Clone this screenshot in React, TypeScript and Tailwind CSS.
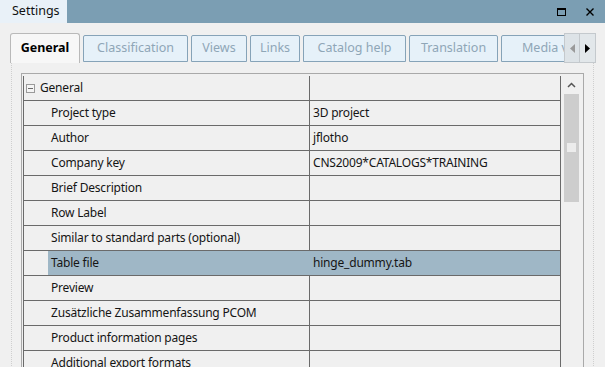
import React from 'react'

const rows: { label: string; value?: string; selected?: boolean }[] = [
  { label: 'Project type', value: '3D project' },
  { label: 'Author', value: 'jflotho' },
  { label: 'Company key', value: 'CNS2009*CATALOGS*TRAINING' },
  { label: 'Brief Description' },
  { label: 'Row Label' },
  { label: 'Similar to standard parts (optional)' },
  { label: 'Table file', value: 'hinge_dummy.tab', selected: true },
  { label: 'Preview' },
  { label: 'Zusätzliche Zusammenfassung PCOM' },
  { label: 'Product information pages' },
  { label: 'Additional export formats' },
]

const tabs = [
  { label: 'Classification', w: 'w-[105px]' },
  { label: 'Views', w: 'w-[56px]' },
  { label: 'Links', w: 'w-[50px]' },
  { label: 'Catalog help', w: 'w-[103px]' },
  { label: 'Translation', w: 'w-[89px]' },
  { label: 'Media variants', w: 'w-[100px]' },
]

function TitleBar() {
  return (
    <div className="flex h-[23px] bg-[#7b9eb3]">
      <div className="flex w-[67px] items-center bg-[#e9f1f8] pl-[12px] text-[12.5px] text-[#111]">Settings</div>
      <div className="flex-1" />
      <div className="flex items-center gap-[20px] pr-[11px]">
        <div className="h-[8px] w-[9px] border border-t-2 border-black" />
        <svg width="8" height="8" viewBox="0 0 8 8">
          <path d="M0.5 0.5L7.5 7.5M7.5 0.5L0.5 7.5" stroke="#000" strokeWidth="1.4" />
        </svg>
      </div>
    </div>
  )
}

function TabStrip() {
  return (
    <div className="relative flex h-[39px] items-end pl-[10px]">
      <div className="z-10 -mb-px flex h-[30px] w-[70px] items-center justify-center rounded-t-[3px] border border-b-0 border-[#b9b9b9] bg-[#f7f7f7] text-[12.5px] font-bold text-black">
        General
      </div>
      <div className="flex h-[30px] w-[484px] items-end gap-[3px] overflow-hidden pl-[3px]">
        {tabs.map((t) => (
          <div
            key={t.label}
            className={`flex h-[27px] shrink-0 items-center overflow-hidden whitespace-nowrap rounded-t-[2px] border border-[#86a3b8] bg-[#e6f1f9] text-[12.5px] text-[#8fa6b7] ${t.w} ${t.label === 'Media variants' ? 'justify-start pl-[20px]' : 'justify-center'}`}
          >
            {t.label}
          </div>
        ))}
      </div>
      <div className="absolute right-[9px] top-[10px] flex h-[30px]">
        <div className="flex w-[16px] items-center justify-center border border-[#c4c9cd] bg-[#dde3e7]">
          <svg width="5" height="9" viewBox="0 0 5 9"><path d="M5 0L0 4.5L5 9Z" fill="#9a9a9a" /></svg>
        </div>
        <div className="flex w-[16px] items-center justify-center border border-l-0 border-[#c4c9cd] bg-[#e2e7ea]">
          <svg width="5" height="9" viewBox="0 0 5 9"><path d="M0 0L5 4.5L0 9Z" fill="#000" /></svg>
        </div>
      </div>
    </div>
  )
}

function Row({ label, value, selected }: { label: string; value?: string; selected?: boolean }) {
  return (
    <div className="flex h-[25px] border-t border-[#6a6a6a]">
      <div className="w-[24px] shrink-0" />
      <div className={`flex w-[261px] shrink-0 items-center pl-[3px] ${selected ? 'bg-[#9fb7c6]' : ''}`}>{label}</div>
      <div className={`flex flex-1 items-center border-l border-[#6a6a6a] pl-[3px] ${selected ? 'border-l-0 bg-[#9fb7c6] pl-[4px]' : ''}`}>{value}</div>
    </div>
  )
}

function PropertyGrid() {
  return (
    <div className="flex h-[400px] border border-[#a9a9a9] pt-[2px] pl-[1px]">
      <div className="flex w-[538px] flex-col border-r border-l border-[#6a6a6a] text-[12px] tracking-[-0.2px] text-[#151515]">
        <div className="flex h-[24px]">
          <div className="flex w-[285px] shrink-0 items-center pl-[2px]">
            <div className="mr-[5px] flex h-[9px] w-[9px] items-center justify-center border border-[#9a9a9a] bg-[#f4f4f4]">
              <div className="h-px w-[5px] bg-[#6a6a6a]" />
            </div>
            General
          </div>
          <div className="flex-1 border-l border-[#6a6a6a]" />
        </div>
        {rows.map((r) => (
          <Row key={r.label} {...r} />
        ))}
      </div>
      <div className="flex w-[21px] flex-col items-center pt-[6px]">
        <svg width="9" height="6" viewBox="0 0 9 6"><path d="M1 5L4.5 1.5L8 5" stroke="#555" strokeWidth="1.5" fill="none" /></svg>
        <div className="mt-[6px] flex h-[108px] w-[15px] flex-col items-center bg-[#cdcdcd] pt-[49px]">
          <div className="h-[9px] w-[9px] bg-[#ececec]" />
        </div>
      </div>
    </div>
  )
}

export default function App() {
  return (
    <div className="h-[367px] w-[605px] overflow-hidden bg-[#f0f0f0] font-['Noto_Sans',sans-serif]">
      <TitleBar />
      <TabStrip />
      <div className="mx-[11px] h-[320px] border-x border-dotted border-[#cfcfcf] px-[9px] pt-[11px]">
        <PropertyGrid />
      </div>
    </div>
  )
}
